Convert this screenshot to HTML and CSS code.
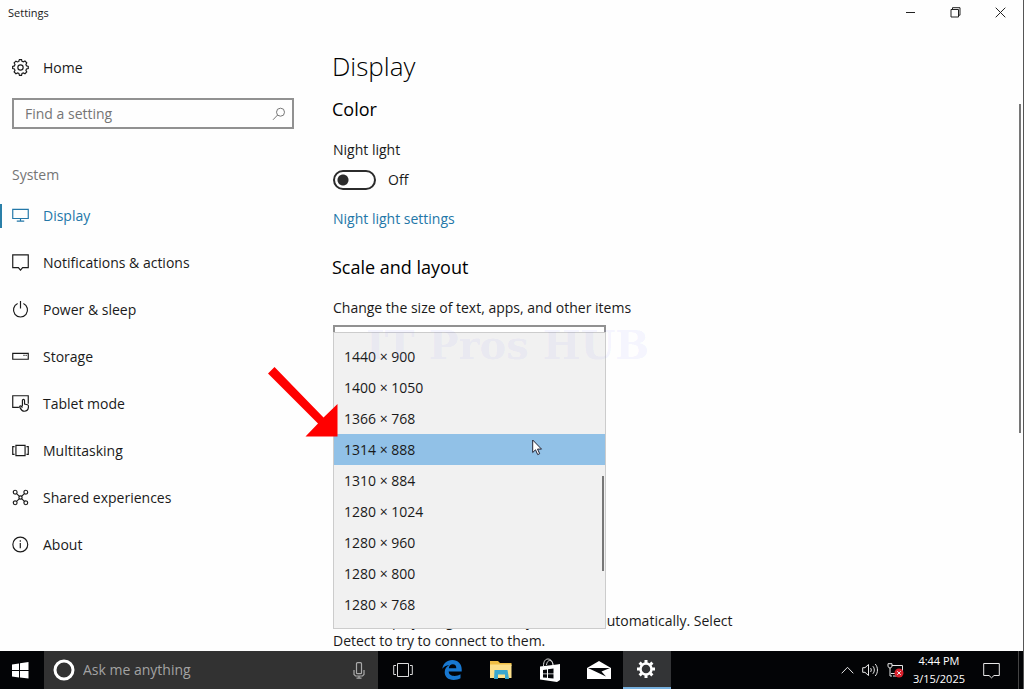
FILE: index.html
```
<!DOCTYPE html>
<html lang="en">
<head>
    <meta charset="UTF-8">
    <meta name="viewport" content="width=device-width, initial-scale=1">
    <title>Settings</title>
    <link rel="stylesheet" href="styles.css">
</head>
<body>
    <header class="titlebar">
        <span class="title">Settings</span>
        <div class="window-buttons">
            <button aria-label="Minimize"><svg width="11" height="11" viewBox="0 0 11 11"><path d="M1 5.500h9"/></svg></button>
            <button aria-label="Restore"><svg width="11" height="11" viewBox="0 0 11 11"><path d="M1 2.500h7.500v7.500H1zM2.500 2.500V.7H10v7.500H8.500"/></svg></button>
            <button aria-label="Close"><svg width="11" height="11" viewBox="0 0 11 11"><path d="M.7.7l9.600 9.600M10.300.7L.7 10.300"/></svg></button>
        </div>
    </header>

    <div class="window">
        <aside class="sidebar">
            <a class="nav-item" href="#home">
                <svg class="icon" viewBox="0 0 16 16"><path d="M6.600 1.200L7 .6h2l.4 1.600 1.300.5 1.500-.8 1.700 1.700-.8 1.500.5 1.300 1.700.5v2l-1.700.5-.5 1.300.8 1.500-1.700 1.700-1.500-.8-1.300.5L9 15.400H7l-.5-1.800-1.300-.5-1.500.8L2 12.200l.8-1.500-.5-1.300L.6 9V7l1.700-.5.5-1.300L2 3.700 3.700 2l1.500.8 1.300-.5z"/><circle cx="8" cy="8" r="2.500"/></svg>
                Home
            </a>
            <div class="search">
                <input type="text" placeholder="Find a setting" aria-label="Find a setting">
                <svg width="14" height="14" viewBox="0 0 14 14"><circle cx="8.500" cy="5.200" r="4"/><path d="M5.600 8L1 12.800"/></svg>
            </div>
            <h3 class="group">System</h3>
            <nav>
                <a class="nav-item active" href="#display">
                    <svg class="icon" viewBox="0 0 16 16"><path d="M.7 2.200h14.600v8.600H.7zM8 10.800v2.500M4.500 13.300h7"/></svg>
                    Display
                </a>
                <a class="nav-item" href="#notifications">
                    <svg class="icon" viewBox="0 0 16 16"><path d="M.7.8h14.600v12H10l-2 2.400-2-2.400H.7z"/></svg>
                    Notifications &amp; actions
                </a>
                <a class="nav-item" href="#power">
                    <svg class="icon" viewBox="0 0 16 16"><path d="M5.300 2.400a6.600 6.600 0 1 0 5.400 0M8 0v7"/></svg>
                    Power &amp; sleep
                </a>
                <a class="nav-item" href="#storage">
                    <svg class="icon" viewBox="0 0 16 16"><path d="M.7 5h14.600v5.600H.7zM10.800 7h1M12.800 7h1"/></svg>
                    Storage
                </a>
                <a class="nav-item" href="#tablet">
                    <svg class="icon" viewBox="0 0 16 16"><path d="M6.500 11.700H.7v-11h14.600v7.500M9.800 10.500V5.200c0-1.500 2-1.500 2 0v3.300l2.700.7c.8.2 1 .7 1 1.500 0 2.700-1 4.600-4 4.600-2 0-2.700-1-4-3.400-.8-1.500.6-2 1.300-1.300l1 1.200"/></svg>
                    Tablet mode
                </a>
                <a class="nav-item" href="#multitasking">
                    <svg class="icon" viewBox="0 0 16 16"><path d="M3.700 3.200h8.600v9.600H3.700zM2.400 4.300H.7v7.400h1.700M13.600 4.300h1.700v7.400h-1.700"/></svg>
                    Multitasking
                </a>
                <a class="nav-item" href="#shared">
                    <svg class="icon" viewBox="0 0 16 16"><circle cx="3" cy="3" r="1.800"/><circle cx="13" cy="3" r="1.800"/><circle cx="3" cy="13" r="1.800"/><circle cx="13" cy="13" r="1.800"/><circle cx="8" cy="8" r="1.500"/><path d="M4.300 4.300L7 7M11.700 4.300L9 7M4.300 11.700L7 9M11.700 11.700L9 9"/></svg>
                    Shared experiences
                </a>
                <a class="nav-item" href="#about">
                    <svg class="icon" viewBox="0 0 16 16"><circle cx="7.800" cy="8" r="7"/><path d="M7.800 6.500v5M7.800 4v1.300"/></svg>
                    About
                </a>
            </nav>
        </aside>

        <main class="content">
            <h1>Display</h1>
            <h2 class="color-heading">Color</h2>
            <p id="night-label">Night light</p>
            <label class="toggle">
                <input type="checkbox" role="switch" aria-labelledby="night-label">
                <span>Off</span>
            </label>
            <a class="link" href="#night-light">Night light settings</a>

            <h2>Scale and layout</h2>
            <label for="scale">Change the size of text, apps, and other items</label>
            <div class="fields">
                <select id="scale"></select>

                <div class="dropdown" role="listbox" aria-label="Resolution">
                    <button role="option">1440 × 900</button>
                    <button role="option">1400 × 1050</button>
                    <button role="option">1366 × 768</button>
                    <button role="option" class="selected" aria-selected="true">1314 × 888</button>
                    <button role="option">1310 × 884</button>
                    <button role="option">1280 × 1024</button>
                    <button role="option">1280 × 960</button>
                    <button role="option">1280 × 800</button>
                    <button role="option">1280 × 768</button>
                    <span class="dropdown-thumb"></span>
                </div>
                <span class="watermark">IT Pros HUB</span>
                <svg class="arrow" width="70" height="70" viewBox="0 0 70 70"><path d="M0 6.500L6.500 0 55.500 50.500 69.500 37v32.500H37.500L50 56.500z"/></svg>
                <svg class="cursor" width="11" height="17" viewBox="0 0 11 17"><path d="M.7 1v12.500l2.800-2.700 2.200 4.800 2-.9-2.200-4.600h4z"/></svg>
            </div>
            <p>Older displays might not always connect automatically. Select Detect to try to connect to them.</p>
            <span class="page-thumb"></span>
        </main>
    </div>

    <footer class="taskbar">
        <button class="start" aria-label="Start"><svg width="17" height="17" viewBox="0 0 17 17"><path d="M0 2.400L7 1.400V8H0zM8 1.300L16.500 0v8H8zM0 9h7v6.500l-7-1zM8 9h8.500v7.500L8 15.400z"/></svg></button>
        <div class="cortana">
            <svg width="22" height="22" viewBox="0 0 22 22"><circle cx="11" cy="11" r="9" fill="none" stroke="#fff" stroke-width="3"/></svg>
            <input type="text" placeholder="Ask me anything" aria-label="Ask me anything">
            <svg class="mic" width="12" height="17" viewBox="0 0 12 17"><rect x="3.500" y=".7" width="5" height="11" rx="1"/><path d="M1 8v4.500l1.500 1.500h7L11 12.500V8M6 14v2.200M3.500 16.200h5"/></svg>
        </div>
        <button aria-label="Task view"><svg width="20" height="16" viewBox="0 0 20 16" fill="none" stroke="#ddd"><path d="M4.500 1.500h11v13h-11zM3 3.500H.7v9H3M17 3.500h2.300v9H17"/></svg></button>
        <button aria-label="Edge"><svg width="20" height="20" viewBox="0 0 20 20"><path fill="#1878d0" d="M.3 8.800C1 3.500 4.800 0 10.300 0 16 0 19.700 4 19.700 9v2.600H6.700c.1 3 2.500 4.400 5.800 4.400 2.400 0 4.300-.7 6-1.700v4c-2 1.200-4.200 1.700-6.800 1.700-6 0-9-3.400-9-7.700 0-3.500 2-6 4.600-7.300C4 5.500 1.700 6.700.3 8.800zM6.800 8.300h7.500c0-2.700-1.200-4-3.500-4-2.200 0-3.600 1.600-4 4z"/></svg></button>
        <button aria-label="File Explorer"><svg width="22" height="18" viewBox="0 0 22 18"><path fill="#efbe45" d="M0 0h8l2 2h11.500v3H0z"/><path fill="#fce08b" d="M0 3.500h21.500V17H0z"/><path fill="#3aa7cf" d="M4.500 9h13l1.500 9h-4v-4.500H8V18H4z"/></svg></button>
        <button aria-label="Store"><svg width="22" height="24" viewBox="0 0 22 24"><path fill="none" stroke="#ddd" d="M4.500 8C4.500 3 6.500 1 9 1s4.500 2 5 6M7.500 7c.5-3.500 2-4.500 3.500-4.500S13.500 4 14 6.500"/><path fill="#fff" d="M1 8.500L18 6.500l3-.5v16l-3 2L1 21.500z"/><path fill="#05070a" d="M4 12l4-.6v4H4zM9 11.200l5.500-.8v5H9zM4 16.200h4v3.600l-4-.4zM9 16.200h5.500v4.400L9 20z"/></svg></button>
        <button aria-label="Mail"><svg width="24" height="20" viewBox="0 0 24 20"><path fill="#fff" d="M0 8L12 1l12 7v11H0z"/><path fill="#05070a" d="M1 8h22l-8.500 3.500 4.500 5z"/></svg></button>
        <button class="running" aria-label="Settings"><svg width="20" height="20" viewBox="0 0 20 20" fill="none" stroke="#fff"><circle cx="10" cy="10" r="5.500" stroke-width="2.500"/><path stroke-width="3" d="M10 1v3M10 16v3M1 10h3M16 10h3M3.600 3.600l2.200 2.200M14.200 14.200l2.200 2.200M3.600 16.400l2.200-2.200M14.200 5.800l2.200-2.200"/></svg></button>
        <div class="tray">
            <button aria-label="Show hidden icons"><svg width="13" height="8" viewBox="0 0 13 8"><path d="M.7 7.300l5.800-6 5.800 6"/></svg></button>
            <button aria-label="Volume"><svg width="17" height="14" viewBox="0 0 17 14"><path d="M.7 4.700h2.300L6.500 1.500v11L3 9.300H.7zM8.500 5c1 1 1 3 0 4M10.800 3.200c2 2 2 5.600 0 7.600M13.200 1c3 3 3 9 0 12"/></svg></button>
            <button aria-label="Network"><svg width="18" height="15" viewBox="0 0 18 15"><path d="M5 2.500h10.500v7M4 10.500h5M6 13h4M1 .7h4v3L3 5.200 1 3.700zM3 5v8h2"/><circle class="badge" cx="12" cy="10" r="4.500"/><path d="M10.200 8.200l3.600 3.600M13.800 8.200l-3.600 3.600"/></svg></button>
            <div class="clock"><span>4:44 PM</span><span>3/15/2025</span></div>
            <button class="action-center" aria-label="Action center"><svg width="17" height="17" viewBox="0 0 17 17"><path d="M.7 1.500h15.600v12H11l-2.500 2.300L6 13.500H.7z"/></svg></button>
        </div>
    </footer>
</body>
</html>
```
FILE: styles.css
```
* {
    box-sizing: border-box;
}
body {
    margin: 0;
    height: 100vh;
    display: flex;
    flex-direction: column;
    overflow: hidden;
    background: #fefefe;
    border-right: 1px solid #555;
    color: #1a1a1a;
    font-family: "Open Sans", "Noto Sans", sans-serif;
    font-size: 14px;
    line-height: 20px;
}
h1, h2, h3, p {
    margin: 0;
    font-weight: 400;
}
button, input, select {
    font: inherit;
    color: inherit;
}
button {
    border: 0;
    padding: 0;
    background: none;
}
a {
    color: inherit;
    text-decoration: none;
}
svg {
    flex: none;
}

/* title bar */
.titlebar {
    display: flex;
    justify-content: space-between;
    height: 24px;
    padding-left: 8px;
}
.title {
    font-size: 11px;
    line-height: 25px;
}
.window-buttons {
    display: flex;
}
.window-buttons button {
    display: grid;
    place-items: center;
    width: 45px;
}
.window-buttons svg {
    fill: none;
    stroke: #222;
}

.window {
    flex: 1;
    min-height: 0;
    display: flex;
    overflow: hidden;
}

/* sidebar */
.sidebar {
    flex: 0 0 333px;
    padding-top: 20px;
}
.nav-item {
    display: flex;
    align-items: center;
    gap: 14px;
    height: 47px;
    padding-left: 12px;
}
.icon {
    width: 17px;
    height: 17px;
    fill: none;
    stroke: currentColor;
    stroke-width: 1.1;
}
.active {
    color: #2377a8;
    background: linear-gradient(#2a7fa8, #2a7fa8) left center / 2px 24px no-repeat;
}
.search {
    display: flex;
    align-items: center;
    height: 31px;
    margin: 7px 39px 36px 12px;
    padding-right: 6px;
    border: 2px solid #919191;
}
.search input {
    flex: 1;
    min-width: 0;
    border: 0;
    padding: 0 0 0 11px;
    background: none;
    outline: none;
}
.search input::placeholder {
    color: #757575;
}
.search svg {
    fill: none;
    stroke: #777;
}
.group {
    margin-bottom: 7px;
    padding-left: 12px;
    font-size: 14px;
    color: #757575;
}

/* display page */
.content {
    flex: 1;
    position: relative;
    display: flex;
    flex-direction: column;
    align-items: flex-start;
    padding-top: 24px;
}
h1, h2 {
    margin-left: -1px;
    color: #000;
}
h1 {
    font-size: 26px;
    font-weight: 300;
    line-height: 36px;
}
h2 {
    margin-top: 26px;
    margin-bottom: 19px;
    font-size: 18px;
    line-height: 24px;
}
.color-heading {
    margin-top: 13px;
}
.content p {
    max-width: 410px;
}
.toggle {
    display: flex;
    align-items: center;
    gap: 12px;
    margin: 10px 0 19px;
}
.toggle input {
    appearance: none;
    width: 43px;
    height: 20px;
    margin: 0;
    border: 2px solid #2b2b2b;
    border-radius: 10px;
    background: radial-gradient(circle at 8px 8px, #2b2b2b 5px, transparent 6px);
}
.link {
    color: #2377a8;
}
.fields {
    position: relative;
    width: 273px;
    height: 290px;
    margin-top: 7px;
}
.fields select {
    display: block;
    appearance: none;
    width: 100%;
    height: 32px;
    border: 2px solid #919191;
    background: #fff;
}
.dropdown {
    position: absolute;
    top: 7px;
    left: 0;
    width: 100%;
    padding: 8px 0;
    border: 1px solid #ccc;
    background: #f1f1f1;
}
.dropdown button {
    display: block;
    width: 100%;
    height: 31px;
    padding-left: 10px;
    text-align: left;
}
.dropdown .selected {
    background: #91c1e7;
}
.dropdown-thumb {
    position: absolute;
    top: 143px;
    right: 1px;
    width: 2px;
    height: 95px;
    background: #777;
}
.page-thumb {
    position: absolute;
    top: 80px;
    right: 2px;
    width: 2px;
    height: 329px;
    background: #777;
}
.watermark {
    position: absolute;
    top: -1px;
    left: 33px;
    font-family: "DejaVu Serif", serif;
    font-size: 40px;
    font-weight: 700;
    line-height: 42px;
    white-space: nowrap;
    color: rgba(120, 120, 255, 0.08);
}
.arrow {
    position: absolute;
    top: 42px;
    left: -65px;
    fill: #f00;
}
.cursor {
    position: absolute;
    top: 114px;
    left: 199px;
    fill: #fff;
    stroke: #223;
}

/* taskbar */
.taskbar {
    display: flex;
    height: 38px;
    background: #030406;
    color: #fff;
}
.taskbar > button {
    display: grid;
    place-items: center;
    width: 49px;
}
.taskbar .start {
    width: 44px;
    padding-right: 4px;
    fill: #fff;
}
.cortana {
    flex: 0 0 334px;
    display: flex;
    align-items: center;
    gap: 8px;
    padding: 0 13px 0 9px;
    background: #323232;
}
.cortana input {
    flex: 1;
    min-width: 0;
    border: 0;
    padding: 0;
    background: none;
    outline: none;
}
.cortana input::placeholder {
    color: #a3a3a3;
}
.mic {
    fill: none;
    stroke: #aaa;
    stroke-width: 1.2;
}
.taskbar .running {
    width: 48px;
    background: #333436;
    border-bottom: 2px solid #76b0de;
    padding-right: 2px;
}
.tray {
    display: flex;
    align-items: center;
    gap: 8px;
    margin-left: auto;
    margin-right: 4px;
    padding-right: 18px;
    border-right: 1px solid #444;
}
.tray button {
    display: grid;
    place-items: center;
}
.tray svg {
    fill: none;
    stroke: #e8e8e8;
}
.tray .badge {
    fill: #d8202c;
    stroke: none;
}
.clock {
    display: flex;
    flex-direction: column;
    align-items: center;
    font-size: 11px;
    line-height: 18px;
}
.action-center {
    margin-left: 10px;
}
```
